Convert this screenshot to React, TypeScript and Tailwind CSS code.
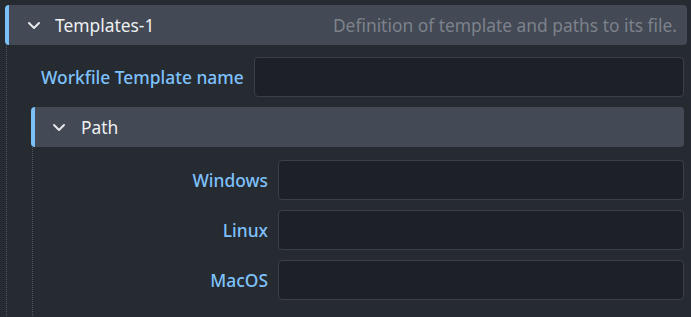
const Chevron = () => (
  <svg width="14" height="9" viewBox="0 0 14 9" className="shrink-0">
    <polyline
      points="2,2 7,7 12,2"
      fill="none"
      stroke="#e6e8eb"
      strokeWidth="2"
      strokeLinecap="round"
      strokeLinejoin="round"
    />
  </svg>
);

const Field = () => (
  <div className="h-10 flex-1 rounded-[4px] border border-[#3b3f47] bg-[#1d2027]" />
);

const PathRow = ({ label }: { label: string }) => (
  <div className="flex items-center gap-[10px]">
    <div className="w-[235px] text-right font-medium text-[#7ec1fb]">{label}</div>
    <Field />
  </div>
);

const App = () => {
  return (
    <div
      className="h-[317px] w-[691px] overflow-hidden bg-[#262a31] pl-[5px] pr-[4px] pt-[5px] text-[17.4px]"
      style={{ fontFamily: '"Noto Sans", sans-serif' }}
    >
      {/* Templates-1 */}
      <div className="flex h-10 items-center rounded-[4px] border-l-4 border-[#7cc0f5] bg-[#434955] pl-[18px] pr-[10px]">
        <Chevron />
        <span className="ml-[14px] text-[#eef0f2]">Templates-1</span>
        <span className="ml-auto text-[#7d828b]">Definition of template and paths to its file.</span>
      </div>
      <div className="ml-[1px] border-l border-dotted border-[#50555e] pr-[3px] pt-3">
        <div className="flex items-center gap-[10px] pl-[34px]">
          <div className="font-medium text-[#7ec1fb]">Workfile Template name</div>
          <Field />
        </div>
        {/* Path */}
        <div className="pl-[24px] pt-[10px]">
          <div className="flex h-10 items-center rounded-[4px] border-l-4 border-[#7cc0f5] bg-[#434955] pl-[17px]">
            <Chevron />
            <span className="ml-[15px] text-[#eef0f2]">Path</span>
          </div>
          <div className="ml-[1px] flex flex-col gap-[10px] border-l border-dotted border-[#50555e] pb-4 pt-[13px]">
            <PathRow label="Windows" />
            <PathRow label="Linux" />
            <PathRow label="MacOS" />
          </div>
        </div>
      </div>
    </div>
  );
};

export default App;
